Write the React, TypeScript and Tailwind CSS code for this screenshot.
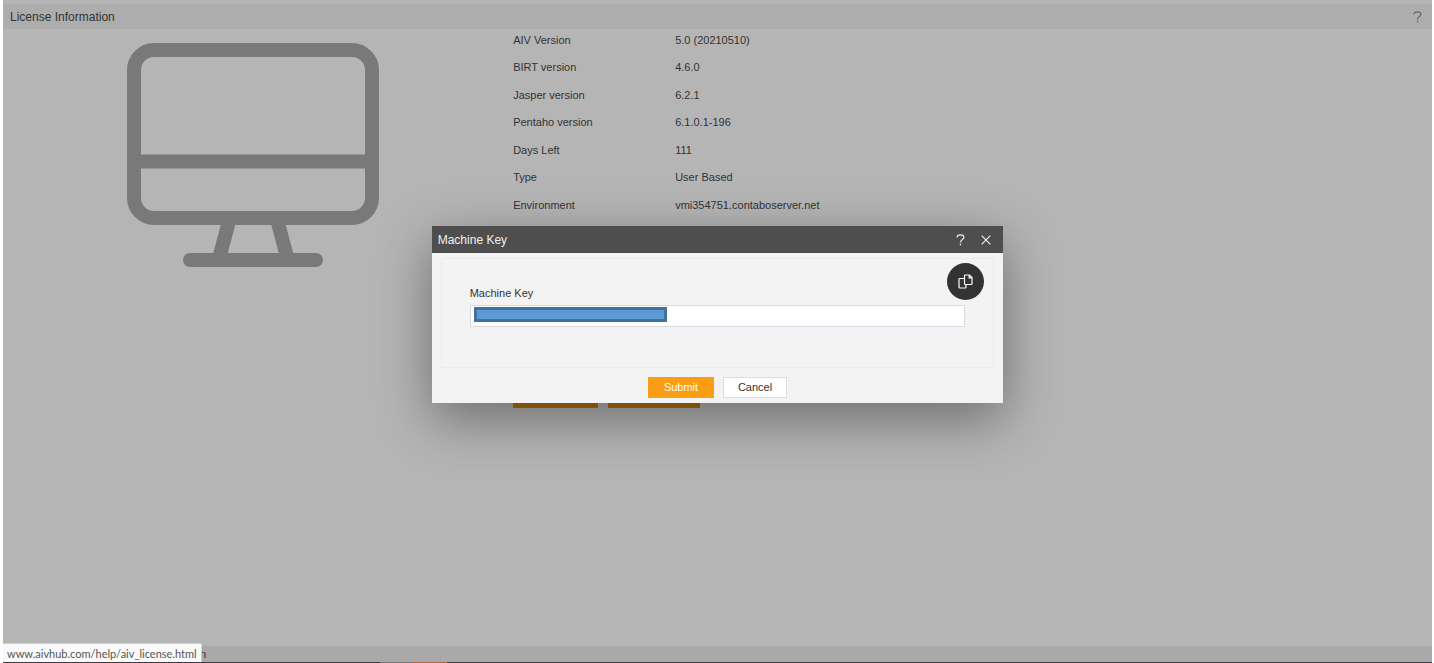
import { useState } from 'react'

const LICENSE_ROWS = [
  { label: 'AIV Version', value: '5.0 (20210510)' },
  { label: 'BIRT version', value: '4.6.0' },
  { label: 'Jasper version', value: '6.2.1' },
  { label: 'Pentaho version', value: '6.1.0.1-196' },
  { label: 'Days Left', value: '111' },
  { label: 'Type', value: 'User Based' },
  { label: 'Environment', value: 'vmi354751.contaboserver.net' },
]

function MonitorIcon() {
  return (
    <svg className="w-[252px] h-[224px]" viewBox="0 0 252 224" fill="none" stroke="#797979" strokeWidth="14">
      <rect x="7" y="7" width="238" height="168" rx="20" />
      <path d="M7 118.5H245" />
      <path d="M101.500 180L92.500 214M151 180L160 214" />
      <path d="M63 217H189" strokeLinecap="round" />
    </svg>
  )
}

function HelpIcon() {
  return (
    <svg width="9" height="12" viewBox="0 0 9 12" fill="none" stroke="currentColor" strokeWidth="1.200">
      <path d="M1 3.600C1 1.700 2.400 0.800 4.400 0.800C6.500 0.800 7.900 1.800 7.900 3.300C7.900 5.600 4.500 5.400 4.500 8.600" />
      <path d="M4.500 9.700V11.300" strokeWidth="1.400" />
    </svg>
  )
}

function CloseIcon() {
  return (
    <svg width="10" height="10" viewBox="0 0 10 10" fill="none" stroke="currentColor" strokeWidth="1.200">
      <path d="M0.700 0.700L9.300 9.300M9.300 0.700L0.700 9.300" />
    </svg>
  )
}

function CopyIcon() {
  return (
    <svg width="15" height="15" viewBox="0 0 15 15" fill="none" stroke="currentColor" strokeWidth="1.200">
      <path d="M6.500 4.500H1.800Q1 4.500 1 5.300V13.200Q1 14 1.800 14H7.200Q8 14 8 13.200V10.500" />
      <path d="M7.300 1H11.500L14 3.500V9.700Q14 10.500 13.200 10.500H7.300Q6.500 10.500 6.500 9.700V1.800Q6.500 1 7.300 1Z" />
      <path d="M11.200 1V3.800H14" />
    </svg>
  )
}

function MachineKeyDialog() {
  const [key, setKey] = useState('')

  return (
    <div role="dialog" aria-labelledby="dialog-title" className="w-2/5 bg-[#f3f3f3] shadow-[0_16px_50px_0_rgba(0,0,0,0.4)]">
      {/* Title bar */}
      <div className="flex h-[27px] items-center bg-[#4e4e4e] px-1.5 text-[#f0f0f0]">
        <h2 id="dialog-title" className="flex-1 pt-px text-[12px]">Machine Key</h2>
        <button type="button" aria-label="Help" className="mr-4"><HelpIcon /></button>
        <button type="button" aria-label="Close" className="mr-[6px]"><CloseIcon /></button>
      </div>

      {/* Key field */}
      <div className="px-[9px] pt-[5px]">
        <div className="relative h-[110px] border border-[#ebebeb] px-7 pt-7">
          <label htmlFor="machine-key" className="block h-[18px] text-[11px] leading-[13px]">Machine Key</label>
          <div className="relative">
            <input
              id="machine-key"
              type="text"
              value={key}
              onChange={e => setKey(e.target.value)}
              className="block h-[22px] w-full border border-[#d5d9e6] bg-white px-1 text-[11px] outline-none"
            />
            <span className="absolute top-0.5 left-1 h-[15px] w-[193px] border-3 border-[#41719c] bg-[#5b9bd5]" />
          </div>
          <button type="button" aria-label="Copy"
            className="absolute top-1 right-[9px] flex h-[37px] w-[37px] items-center justify-center rounded-full bg-[#333333] text-white">
            <CopyIcon />
          </button>
        </div>
      </div>

      {/* Actions */}
      <div className="flex justify-center gap-[9px] pt-[9px] pb-[5px] text-[11px]">
        <button type="button" className="h-[21px] w-[66px] bg-[#f99d15] text-white">Submit</button>
        <button type="button" className="h-[21px] w-[64px] border border-[#dddddd] bg-white">Cancel</button>
      </div>
    </div>
  )
}

export default function App() {
  return (
    <div className="relative flex min-h-screen flex-col border-r-2 border-l-3 border-white bg-[#b5b5b5] font-['Liberation_Sans',Arial,sans-serif] text-[#333333]">
      <header className="mt-1 flex h-[25px] items-center justify-between bg-[#adadad] pr-[10px] pl-[7px]">
        <h1 className="text-[12px]">License Information</h1>
        <button type="button" aria-label="Help" className="text-[#666666]"><HelpIcon /></button>
      </header>

      <main className="flex flex-1">
        <div className="flex w-[35%] items-start justify-center pt-[14px]">
          <MonitorIcon />
        </div>
        <div className="flex-1 pl-[10px]">
          <dl className="grid h-48 auto-rows-fr grid-cols-[162px_1fr] text-[11px] leading-[22px]">
            {LICENSE_ROWS.map(row => (
              <div key={row.label} className="contents">
                <dt>{row.label}</dt>
                <dd>{row.value}</dd>
              </div>
            ))}
          </dl>
          <div className="flex gap-[10px] pt-[166px]">
            <button type="button" className="h-[21px] w-[85px] bg-[#b0700c]" />
            <button type="button" className="h-[21px] w-[92px] bg-[#b0700c]" />
          </div>
        </div>
      </main>

      <footer>
        <div className="flex h-4 items-center bg-[#a9a9a9] pl-[197px] text-[11px]">n</div>
        <div className="flex h-px bg-[#3c3c42] pl-[377px]">
          <span className="w-[34px] bg-[#77777a]" />
          <span className="w-[33px] bg-[#c0682c]" />
        </div>
      </footer>

      <div className="absolute inset-0 flex items-start justify-center pt-[226px]">
        <MachineKeyDialog />
      </div>

      {/* Link address shown by the browser */}
      <a href="#help"
        className="absolute bottom-px left-0 h-[19px] border-t border-r border-[#d0d0d0] bg-[#fafafa] pr-1 pl-1 font-['Lato','Noto_Sans',sans-serif] text-[11px] leading-[19px] text-[#555555]">
        www.aivhub.com/help/aiv_license.html
      </a>
    </div>
  )
}
